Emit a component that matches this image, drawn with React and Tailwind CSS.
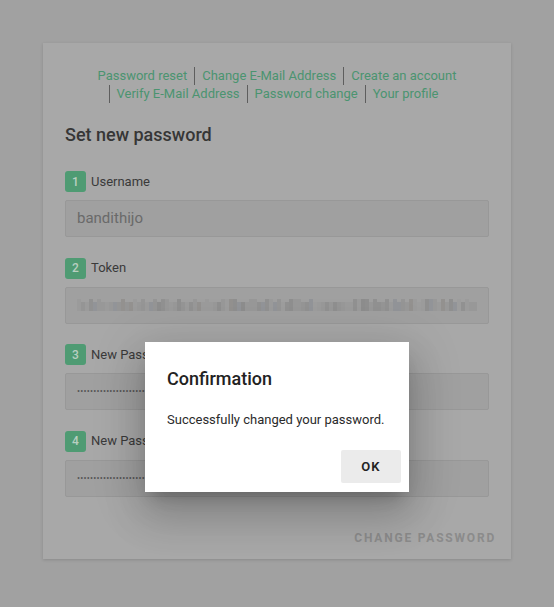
import React from 'react';

const links = [
  'Password reset',
  'Change E-Mail Address',
  'Create an account',
  'Verify E-Mail Address',
  'Password change',
  'Your profile',
];

const fields = [
  { n: 1, label: 'Username', value: 'bandithijo', kind: 'text' },
  { n: 2, label: 'Token', kind: 'token' },
  { n: 3, label: 'New Password', kind: 'password' },
  { n: 4, label: 'New Password (repeat)', kind: 'password' },
];

// pixelated (blurred) token, built once from a tiny seeded generator
const tokenShades = ['#8e8e8e', '#939393', '#979797', '#8a8a8a', '#9a9a9a', '#8f9296', '#969696', '#8c8c8c', '#9c9c9c', '#918e8c'];
const tokenBlocks = (() => {
  let s = 7;
  const out = [];
  for (let i = 0; i < 100; i++) {
    s = (s * 9301 + 49297) % 233280;
    const r = s / 233280;
    s = (s * 9301 + 49297) % 233280;
    const r2 = s / 233280;
    out.push({ x: i * 4, c: tokenShades[Math.floor(r * tokenShades.length)], tall: r2 > 0.55 });
  }
  return out;
})();

function TokenBlur() {
  return (
    <svg width="400" height="14" viewBox="0 0 400 14" className="block">
      {tokenBlocks.map((b, i) => (
        <rect key={i} x={b.x} y={b.tall ? 1 : 4} width="4" height={b.tall ? 12 : 9} fill={b.c} opacity="0.85" />
      ))}
    </svg>
  );
}

function Field({ f }) {
  return (
    <div className="flex flex-col">
      <div className="flex items-center h-[21px]">
        <span className="w-[21px] h-[21px] rounded-[3px] bg-[#4f9b73] text-[#b9cfc1] text-[12px] font-medium flex items-center justify-center">
          {f.n}
        </span>
        <span className="ml-[5px] text-[13px] text-[#3a3a3a]">{f.label}</span>
      </div>
      <div className="mt-[8px] h-[37px] border border-[#989898] bg-[#a0a0a0] rounded-[2px] flex items-center pl-[11px] pr-[10px] overflow-hidden">
        {f.kind === 'text' && <span className="text-[15px] text-[#6a6a6a]">{f.value}</span>}
        {f.kind === 'token' && <TokenBlur />}
        {f.kind === 'password' && (
          <span className="text-[9px] tracking-[0.2px] text-[#555555] leading-none">
            {'•'.repeat(36)}
          </span>
        )}
      </div>
    </div>
  );
}

export default function App() {
  return (
    <div
      className="relative min-h-[607px] bg-[#a1a1a1] flex justify-center pt-[43px]"
      style={{ fontFamily: 'Roboto, "Liberation Sans", sans-serif' }}
    >
      <div className="w-[468px] h-[516px] bg-[#a8a8a8] shadow-[0_1px_3px_rgba(0,0,0,0.15)] px-[22px] pt-[24px] flex flex-col">
        <div className="text-center text-[13px] leading-[18px] px-[12px]">
          {links.map((l, i) => (
            <span
              key={l}
              className={
                i === 0
                  ? 'inline-block px-[7px] text-[#4b9470]'
                  : 'inline-block px-[7px] text-[#4b9470] border-l border-[#5e5e5e]'
              }
            >
              {l}
            </span>
          ))}
        </div>

        <h1 className="mt-[21px] text-[18px] font-medium text-[#363636] leading-[22px]">Set new password</h1>

        <div className="mt-[25px] flex flex-col gap-[20.5px]">
          {fields.map((f) => (
            <Field key={f.n} f={f} />
          ))}
        </div>

        <div className="mt-auto mb-[12px] flex justify-end">
          <span className="mr-[-7px] text-[12px] font-bold tracking-[1.8px] text-[#8b8b8b]">CHANGE PASSWORD</span>
        </div>
      </div>

      {/* dialog */}
      <div className="absolute left-[145px] top-[342px] w-[264px] h-[150px] bg-white shadow-[0_11px_15px_-7px_rgba(0,0,0,0.2),0_24px_38px_3px_rgba(0,0,0,0.14),0_9px_46px_8px_rgba(0,0,0,0.12)] flex flex-col">
        <div className="pl-[22px] pt-[26px] text-[18px] font-medium text-[#222] leading-[22px]">Confirmation</div>
        <div className="pl-[22px] mt-[21px] text-[13px] text-[#2a2a2a] leading-[18px]">Successfully changed your password.</div>
        <div className="mt-auto mb-[9px] mr-[8px] flex justify-end">
          <span className="w-[60px] h-[33px] bg-[#ebebeb] rounded-[2px] flex items-center justify-center text-[13px] font-semibold tracking-[1.2px] text-[#222]">
            OK
          </span>
        </div>
      </div>
    </div>
  );
}
